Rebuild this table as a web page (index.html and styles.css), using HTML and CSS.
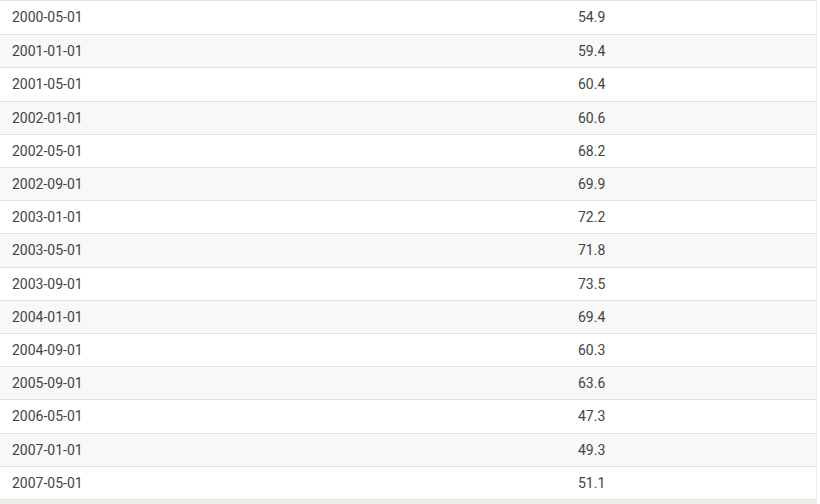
FILE: index.html
```html
<!DOCTYPE html>
<html>
<head>
<meta charset="utf-8">
<link rel="stylesheet" href="styles.css">
</head>
<body>
<div class="wrap">
<table class="data">
<tbody>
<tr><td class="c1">2000-05-01</td><td>54.9</td></tr>
<tr><td class="c1">2001-01-01</td><td>59.4</td></tr>
<tr><td class="c1">2001-05-01</td><td>60.4</td></tr>
<tr><td class="c1">2002-01-01</td><td>60.6</td></tr>
<tr><td class="c1">2002-05-01</td><td>68.2</td></tr>
<tr><td class="c1">2002-09-01</td><td>69.9</td></tr>
<tr><td class="c1">2003-01-01</td><td>72.2</td></tr>
<tr><td class="c1">2003-05-01</td><td>71.8</td></tr>
<tr><td class="c1">2003-09-01</td><td>73.5</td></tr>
<tr><td class="c1">2004-01-01</td><td>69.4</td></tr>
<tr><td class="c1">2004-09-01</td><td>60.3</td></tr>
<tr><td class="c1">2005-09-01</td><td>63.6</td></tr>
<tr><td class="c1">2006-05-01</td><td>47.3</td></tr>
<tr><td class="c1">2007-01-01</td><td>49.3</td></tr>
<tr><td class="c1">2007-05-01</td><td>51.1</td></tr>
</tbody>
</table>
<div class="foot"></div>
</div>
</body>
</html>
```
FILE: styles.css
```css
html, body {
  margin: 0;
  padding: 0;
  background: #ffffff;
}
.wrap {
  width: 816px;
  border-top: 1px solid #e4e6dc;
  border-right: 1px solid #ececec;
}
.data {
  width: 100%;
  border-collapse: collapse;
  font-family: Roboto, "Liberation Sans", sans-serif;
  font-size: 14px;
  color: #444444;
}
.data td {
  padding: 6px 12px;
  line-height: 20.2px;
  height: 20.2px;
  border-top: 1px solid #e2e2e2;
  text-align: left;
}
.data tr:first-child td {
  border-top: none;
  height: 21.2px;
}
.data tr:nth-child(even) td {
  background: #f8f8f8;
}
.data td.c1 {
  width: 542px;
}
.foot {
  height: 6px;
  border-top: 1px solid #e2e4da;
  background: #eef0e8;
}
```
